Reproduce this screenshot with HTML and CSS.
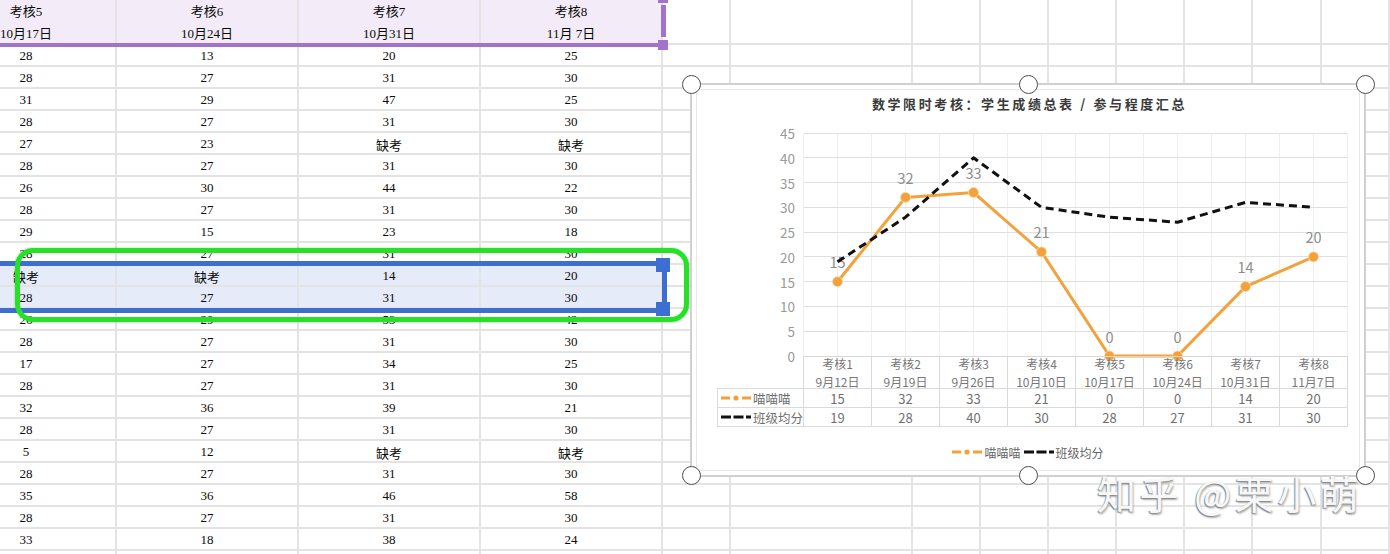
FILE: index.html
```html
<!DOCTYPE html>
<html lang="zh-CN">
<head>
<meta charset="utf-8">
<title>数学限时考核</title>
<link rel="stylesheet" href="styles.css">
</head>
<body>
<div class="stage">
  <div class="sheet">
    <div class="table">
      <div class="row head">
        <div class="cell first"><span>考核5<br>10月17日</span></div>
        <div class="cell"><span>考核6<br>10月24日</span></div>
        <div class="cell"><span>考核7<br>10月31日</span></div>
        <div class="cell"><span>考核8<br>11月 7日</span></div>
      </div>
      <div class="row"><div class="cell first"><span>28</span></div><div class="cell">13</div><div class="cell">20</div><div class="cell">25</div></div>
      <div class="row"><div class="cell first"><span>28</span></div><div class="cell">27</div><div class="cell">31</div><div class="cell">30</div></div>
      <div class="row"><div class="cell first"><span>31</span></div><div class="cell">29</div><div class="cell">47</div><div class="cell">25</div></div>
      <div class="row"><div class="cell first"><span>28</span></div><div class="cell">27</div><div class="cell">31</div><div class="cell">30</div></div>
      <div class="row"><div class="cell first"><span>27</span></div><div class="cell">23</div><div class="cell">缺考</div><div class="cell">缺考</div></div>
      <div class="row"><div class="cell first"><span>28</span></div><div class="cell">27</div><div class="cell">31</div><div class="cell">30</div></div>
      <div class="row"><div class="cell first"><span>26</span></div><div class="cell">30</div><div class="cell">44</div><div class="cell">22</div></div>
      <div class="row"><div class="cell first"><span>28</span></div><div class="cell">27</div><div class="cell">31</div><div class="cell">30</div></div>
      <div class="row"><div class="cell first"><span>29</span></div><div class="cell">15</div><div class="cell">23</div><div class="cell">18</div></div>
      <div class="row"><div class="cell first"><span>28</span></div><div class="cell">27</div><div class="cell">31</div><div class="cell">30</div></div>
      <div class="row sel"><div class="cell first"><span>缺考</span></div><div class="cell">缺考</div><div class="cell">14</div><div class="cell">20</div></div>
      <div class="row sel"><div class="cell first"><span>28</span></div><div class="cell">27</div><div class="cell">31</div><div class="cell">30</div></div>
      <div class="row"><div class="cell first"><span>26</span></div><div class="cell">29</div><div class="cell">53</div><div class="cell">42</div></div>
      <div class="row"><div class="cell first"><span>28</span></div><div class="cell">27</div><div class="cell">31</div><div class="cell">30</div></div>
      <div class="row"><div class="cell first"><span>17</span></div><div class="cell">27</div><div class="cell">34</div><div class="cell">25</div></div>
      <div class="row"><div class="cell first"><span>28</span></div><div class="cell">27</div><div class="cell">31</div><div class="cell">30</div></div>
      <div class="row"><div class="cell first"><span>32</span></div><div class="cell">36</div><div class="cell">39</div><div class="cell">21</div></div>
      <div class="row"><div class="cell first"><span>28</span></div><div class="cell">27</div><div class="cell">31</div><div class="cell">30</div></div>
      <div class="row"><div class="cell first"><span>5</span></div><div class="cell">12</div><div class="cell">缺考</div><div class="cell">缺考</div></div>
      <div class="row"><div class="cell first"><span>28</span></div><div class="cell">27</div><div class="cell">31</div><div class="cell">30</div></div>
      <div class="row"><div class="cell first"><span>35</span></div><div class="cell">36</div><div class="cell">46</div><div class="cell">58</div></div>
      <div class="row"><div class="cell first"><span>28</span></div><div class="cell">27</div><div class="cell">31</div><div class="cell">30</div></div>
      <div class="row"><div class="cell first"><span>33</span></div><div class="cell">18</div><div class="cell">38</div><div class="cell">24</div></div>
      <div class="row"><div class="cell first"></div><div class="cell"></div><div class="cell"></div><div class="cell"></div></div>
    </div>
    <div class="blank">
      <div class="blank-head"></div>
      <div class="blank-body"></div>
    </div>
  </div>

  <div class="hdr-line"></div>
  <div class="hdr-bar"></div>
  <div class="hdr-knob hk-top"></div>
  <div class="hdr-knob hk-bottom"></div>

  <div class="sel-line sl-top"></div>
  <div class="sel-line sl-bottom"></div>
  <div class="sel-knob sk-top"></div>
  <div class="sel-knob sk-bottom"></div>
  <div class="sel-bar"></div>

  <div class="annot"></div>

  <div class="chart">
    <i class="knob k-tl"></i><i class="knob k-tm"></i><i class="knob k-tr"></i>
    <i class="knob k-bl"></i><i class="knob k-bm"></i><i class="knob k-br"></i>
    <div class="chart-title">数学限时考核：学生成绩总表 / 参与程度汇总</div>
    <svg class="plot" width="672" height="233" viewBox="0 0 672 233">
      <path class="vgrid" d="M111.5 10V233M145.5 10V233M179.5 10V233M213.5 10V233M247.5 10V233M281.5 10V233M315.5 10V233M349.5 10V233M383.5 10V233M417.5 10V233M451.5 10V233M485.5 10V233M519.5 10V233M553.5 10V233M587.5 10V233M621.5 10V233M655.5 10V233"/>
      <path class="hgrid" d="M111.5 10.5H655.5M111.5 34.5H655.5M111.5 59.5H655.5M111.5 84.5H655.5M111.5 109.5H655.5M111.5 133.5H655.5M111.5 158.5H655.5M111.5 183.5H655.5M111.5 208.5H655.5"/>
      <g class="ylab">
        <text x="103" y="10">45</text>
        <text x="103" y="34.8">40</text>
        <text x="103" y="59.6">35</text>
        <text x="103" y="84.3">30</text>
        <text x="103" y="109.1">25</text>
        <text x="103" y="133.9">20</text>
        <text x="103" y="158.7">15</text>
        <text x="103" y="183.4">10</text>
        <text x="103" y="208.2">5</text>
        <text x="103" y="233">0</text>
      </g>
      <polyline class="s-orange" points="145.5,158.7 213.5,74.4 281.5,69.5 349.5,128.9 417.5,233 485.5,233 553.5,163.6 621.5,133.9"/>
      <g class="dots">
        <circle cx="145.5" cy="158.7" r="5"/>
        <circle cx="213.5" cy="74.4" r="5"/>
        <circle cx="281.5" cy="69.5" r="5"/>
        <circle cx="349.5" cy="128.9" r="5"/>
        <circle cx="417.5" cy="233" r="5"/>
        <circle cx="485.5" cy="233" r="5"/>
        <circle cx="553.5" cy="163.6" r="5"/>
        <circle cx="621.5" cy="133.9" r="5"/>
      </g>
      <g class="dlab">
        <text x="145.5" y="138.7">15</text>
        <text x="213.5" y="54.4">32</text>
        <text x="281.5" y="49.5">33</text>
        <text x="349.5" y="108.9">21</text>
        <text x="417.5" y="213">0</text>
        <text x="485.5" y="213">0</text>
        <text x="553.5" y="143.6">14</text>
        <text x="621.5" y="113.9">20</text>
      </g>
      <polyline class="s-black" points="145.5,138.8 213.5,94.2 281.5,34.8 349.5,84.3 417.5,94.2 485.5,99.2 553.5,79.4 621.5,84.3"/>
    </svg>
    <div class="dtable">
      <div class="dc corner"></div>
      <div class="dc cat"><span>考核1</span><span>9月12日</span></div>
      <div class="dc cat"><span>考核2</span><span>9月19日</span></div>
      <div class="dc cat"><span>考核3</span><span>9月26日</span></div>
      <div class="dc cat"><span>考核4</span><span>10月10日</span></div>
      <div class="dc cat"><span>考核5</span><span>10月17日</span></div>
      <div class="dc cat"><span>考核6</span><span>10月24日</span></div>
      <div class="dc cat"><span>考核7</span><span>10月31日</span></div>
      <div class="dc cat"><span>考核8</span><span>11月7日</span></div>
      <div class="dc ser">
        <svg class="sym" width="30" height="6" viewBox="0 0 30 6"><path d="M0 3H9M21 3H30" stroke="#f3a23b" stroke-width="3"/><circle cx="15" cy="3" r="2.6" fill="#f3a23b"/></svg>喵喵喵
      </div>
      <div class="dc val">15</div><div class="dc val">32</div><div class="dc val">33</div><div class="dc val">21</div>
      <div class="dc val">0</div><div class="dc val">0</div><div class="dc val">14</div><div class="dc val">20</div>
      <div class="dc ser">
        <svg class="sym" width="30" height="6" viewBox="0 0 30 6"><path d="M0 3H10M12.5 3H22.5M25 3H30" stroke="#111" stroke-width="3"/></svg>班级均分
      </div>
      <div class="dc val">19</div><div class="dc val">28</div><div class="dc val">40</div><div class="dc val">30</div>
      <div class="dc val">28</div><div class="dc val">27</div><div class="dc val">31</div><div class="dc val">30</div>
    </div>
    <div class="legend">
      <span class="lg"><svg class="sym" width="30" height="6" viewBox="0 0 30 6"><path d="M0 3H9M21 3H30" stroke="#f3a23b" stroke-width="3"/><circle cx="15" cy="3" r="2.6" fill="#f3a23b"/></svg>喵喵喵</span>
      <span class="lg"><svg class="sym" width="30" height="6" viewBox="0 0 30 6"><path d="M0 3H10M12.5 3H22.5M25 3H30" stroke="#111" stroke-width="3"/></svg>班级均分</span>
    </div>
  </div>

  <div class="watermark">知乎 @栗小萌</div>
</div>
</body>
</html>
```

FILE: styles.css
```css
* { box-sizing: border-box; }
html, body { margin: 0; padding: 0; }
body {
  width: 1390px;
  height: 554px;
  overflow: hidden;
  background: #fff;
  font-family: "Liberation Serif", "Noto Sans CJK SC", serif;
  color: #0a0a0a;
}
.stage { position: relative; width: 1390px; height: 554px; overflow: hidden; }

/* spreadsheet */
.sheet { display: flex; }
.table { width: 663px; flex-shrink: 0; }
.row { display: flex; height: 22px; }
.row.head { height: 45px; background: #f3ecf8; }
.row.sel { background: #e5ebf8; }
.cell {
  width: 182px;
  flex-shrink: 0;
  border-right: 2px solid #e3e3e3;
  border-bottom: 2px solid #e3e3e3;
  padding-top: 2px;
  display: flex;
  align-items: center;
  justify-content: center;
  font-size: 13px;
  overflow: hidden;
  white-space: nowrap;
}
.cell.first { width: 117px; justify-content: flex-start; }
.cell.first span { width: 182px; flex-shrink: 0; margin-left: -65px; text-align: center; }
.head .cell { align-items: flex-start; line-height: 22px; text-align: center; padding-top: 1px; }

.blank { flex: 1; }
.blank-head {
  height: 45px;
  border-bottom: 2px solid #e3e3e3;
  background: linear-gradient(to right, transparent 0 66px, #e3e3e3 66px 68px, transparent 68px 248px, #e3e3e3 248px 250px, transparent 250px 316px, #e3e3e3 316px 318px, transparent 318px 384px, #e3e3e3 384px 386px, transparent 386px 452px, #e3e3e3 452px 454px, transparent 454px 520px, #e3e3e3 520px 522px, transparent 522px 588px, #e3e3e3 588px 590px, transparent 590px 657px, #e3e3e3 657px 659px, transparent 659px 725px, #e3e3e3 725px);
}
.blank-body {
  height: 509px;
  background:
    linear-gradient(to right, transparent 0 66px, #e3e3e3 66px 68px, transparent 68px 248px, #e3e3e3 248px 250px, transparent 250px 316px, #e3e3e3 316px 318px, transparent 318px 384px, #e3e3e3 384px 386px, transparent 386px 452px, #e3e3e3 452px 454px, transparent 454px 520px, #e3e3e3 520px 522px, transparent 522px 588px, #e3e3e3 588px 590px, transparent 590px 657px, #e3e3e3 657px 659px, transparent 659px 725px, #e3e3e3 725px),
    repeating-linear-gradient(to bottom, transparent 0 20px, #e3e3e3 20px 22px);
}

/* header range selection (purple) */
.hdr-line { position: absolute; left: 0; top: 43px; width: 658px; height: 4px; background: #a173cb; }
.hdr-bar { position: absolute; left: 661px; top: 5px; width: 5px; height: 32px; background: #a173cb; }
.hdr-knob { position: absolute; left: 658px; width: 10px; height: 10px; background: #a173cb; }
.hk-top { top: -7px; }
.hk-bottom { top: 40px; }

/* selected rows (blue) */
.sel-line { position: absolute; left: 0; width: 657px; height: 5px; background: #3c6fcf; }
.sl-top { top: 261px; }
.sl-bottom { top: 308px; }
.sel-knob { position: absolute; left: 656px; width: 14px; height: 14px; background: #3c6fcf; }
.sk-top { top: 258px; }
.sk-bottom { top: 302px; }
.sel-bar { position: absolute; left: 662px; top: 272px; width: 5px; height: 30px; background: #3c6fcf; }

/* green annotation */
.annot {
  position: absolute;
  left: 15px;
  top: 248px;
  width: 674px;
  height: 74px;
  border: 5px solid #27e127;
  border-radius: 18px;
  box-shadow: 0 0 2px rgba(20, 150, 20, 0.5);
}

/* chart */
.chart {
  position: absolute;
  left: 690px;
  top: 83px;
  width: 676px;
  height: 394px;
  border: 2px solid #d0d0d0;
  background: #fff;
  box-shadow: inset 0 0 0 4px #fff, inset 0 0 0 5px #e8e8e8;
  font-family: "Noto Sans CJK SC", "Noto Sans", sans-serif;
}
.knob {
  position: absolute;
  width: 19px;
  height: 19px;
  border: 1.5px solid #4d4d4d;
  border-radius: 50%;
  background: #fff;
  z-index: 2;
}
.k-tl { left: -10px; top: -10px; }
.k-tm { left: 327px; top: -10px; }
.k-tr { left: 664px; top: -10px; }
.k-bl { left: -10px; top: 381px; }
.k-bm { left: 327px; top: 381px; }
.k-br { left: 664px; top: 381px; }

.chart-title {
  height: 38px;
  line-height: 38px;
  text-align: center;
  font-size: 13px;
  font-weight: bold;
  letter-spacing: 2.6px;
  color: #3a3a3a;
  padding-left: 3px;
}
.plot { display: block; overflow: visible; }
.vgrid { stroke: #efefef; stroke-width: 1; fill: none; }
.hgrid { stroke: #e0e0e0; stroke-width: 1; fill: none; }
.ylab text {
  font-family: "Noto Sans CJK SC", sans-serif;
  font-size: 13.5px;
  fill: #9a9a9a;
  text-anchor: end;
  dominant-baseline: central;
}
.dlab text {
  font-family: "Noto Sans CJK SC", sans-serif;
  font-size: 14.5px;
  fill: #8c8c8c;
  text-anchor: middle;
  dominant-baseline: central;
}
.s-orange { fill: none; stroke: #f3a23b; stroke-width: 3; stroke-linejoin: round; }
.dots circle { fill: #f3a23b; stroke: #fbd9a8; stroke-width: 0.8; }
.s-black { fill: none; stroke: #111; stroke-width: 3; stroke-dasharray: 8 5; stroke-linejoin: round; }

.dtable {
  display: grid;
  grid-template-columns: 87px repeat(8, 68px);
  grid-template-rows: 33px 19px 19px;
  margin-left: 25px;
  width: 631px;
  color: #6f6f6f;
}
.dc {
  border-right: 1px solid #dadada;
  border-bottom: 1px solid #dadada;
  display: flex;
  align-items: center;
  justify-content: center;
  white-space: nowrap;
}
.dc.cat {
  border-top: 1px solid #d6d6d6;
  flex-direction: column;
  font-size: 12px;
  color: #777;
}
.dc.cat span { display: block; height: 17.4px; line-height: 17.4px; flex-shrink: 0; }
.dc.ser {
  border-left: 1px solid #dadada;
  justify-content: flex-start;
  padding-left: 3px;
  gap: 2px;
  font-size: 12.5px;
}
.dc.val { font-size: 13px; }
.sym { display: block; flex-shrink: 0; }

.legend {
  display: flex;
  justify-content: center;
  align-items: center;
  gap: 3px;
  margin-top: 17px;
  height: 16px;
  font-size: 12px;
  color: #666;
}
.lg { display: flex; align-items: center; gap: 2px; }

/* watermark */
.watermark {
  position: absolute;
  left: 1097px;
  top: 470px;
  font-family: "Noto Sans CJK SC", sans-serif;
  font-size: 39px;
  line-height: 44px;
  letter-spacing: 3.5px;
  color: #f7f7f7;
  text-shadow: -1px 1px 1px #8a8a8a, 1px 2px 2px #b0b0b0;
  white-space: nowrap;
}
```
